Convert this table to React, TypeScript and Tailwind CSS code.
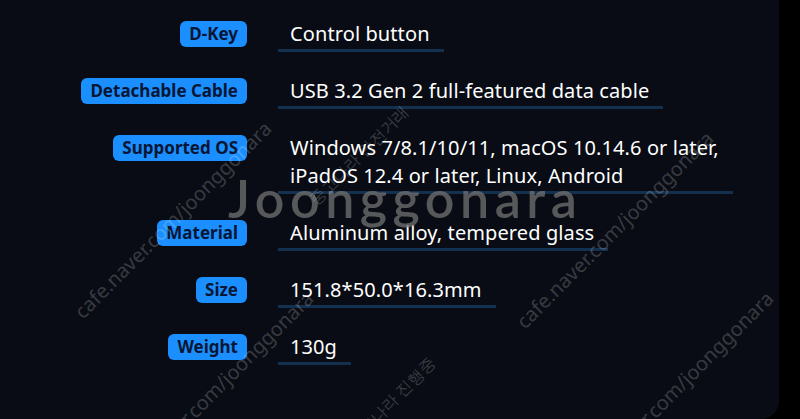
import React from "react";

const rows: { label: string; value: string[] }[] = [
  { label: "D-Key", value: ["Control button"] },
  { label: "Detachable Cable", value: ["USB 3.2 Gen 2 full-featured data cable"] },
  {
    label: "Supported OS",
    value: ["Windows 7/8.1/10/11, macOS 10.14.6 or later,", "iPadOS 12.4 or later, Linux, Android"],
  },
  { label: "Material", value: ["Aluminum alloy, tempered glass"] },
  { label: "Size", value: ["151.8*50.0*16.3mm"] },
  { label: "Weight", value: ["130g"] },
];

function Mark({ x, y, text, angle = -45, size = 20 }: { x: number; y: number; text: string; angle?: number; size?: number }) {
  return (
    <div
      className="absolute whitespace-nowrap text-white/20 pointer-events-none origin-left"
      style={{ left: x, top: y, transform: `rotate(${angle}deg)`, fontSize: size, fontFamily: "'Noto Sans', sans-serif" }}
    >
      {text}
    </div>
  );
}

export default function App() {
  return (
    <div className="w-[800px] h-[419px] flex bg-black overflow-hidden">
      <div className="relative w-[779px] h-full bg-[#090c14] rounded-br-[18px] overflow-hidden">
        <div className="flex flex-col gap-[25px] pt-[20px]">
          {rows.map((r) => (
            <div key={r.label} className="flex items-start">
              <div className="w-[247px] flex justify-end pt-[1px] shrink-0">
                <span className="h-[26px] px-[9px] rounded-[6px] bg-[#1b8fff] text-[#071634] text-[17px] font-bold leading-[26px] font-['Noto_Sans',sans-serif]">
                  {r.label}
                </span>
              </div>
              <div className="ml-[31px] pl-[12px] pr-[14px] border-b-[3px] border-[#14304f] text-white text-[20px] leading-[28px] pb-[1px] tracking-[0.1px] font-['Noto_Sans',sans-serif]">
                {r.value.map((v) => (
                  <div key={v}>{v}</div>
                ))}
              </div>
            </div>
          ))}
        </div>

        <div className="absolute left-[228px] top-[168px] text-[52px] font-semibold leading-[60px] text-[#727272]/75 tracking-[5.5px] font-['Lato',sans-serif] pointer-events-none">
          Joonggonara
        </div>
        <Mark x={78} y={300} text="cafe.naver.com/joonggonara" />
        <Mark x={120} y={470} text="cafe.naver.com/joonggonara" />
        <Mark x={520} y={310} text="cafe.naver.com/joonggonara" />
        <Mark x={580} y={470} text="cafe.naver.com/joonggonara" />
        <Mark x={312} y={190} text="중고나라 안전거래" angle={-45} size={16} />
        <Mark x={350} y={430} text="중고나라 진행중" angle={-45} size={16} />
      </div>
      <div className="flex-1 bg-black" />
    </div>
  );
}
